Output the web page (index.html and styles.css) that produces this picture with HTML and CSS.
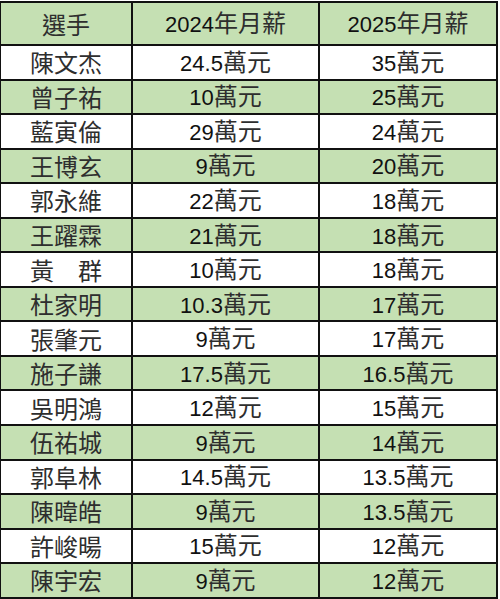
FILE: index.html
```html
<!DOCTYPE html>
<html lang="zh-Hant">
<head>
<meta charset="utf-8">
<link rel="stylesheet" href="styles.css">
</head>
<body>
<table class="salary">
  <thead>
    <tr class="green head">
      <th class="name">選手</th>
      <th>2024<span class="cjk">年月薪</span></th>
      <th>2025<span class="cjk">年月薪</span></th>
    </tr>
  </thead>
  <tbody>
    <tr><td class="name">陳文杰</td><td>24.5<span class="cjk">萬元</span></td><td>35<span class="cjk">萬元</span></td></tr>
    <tr class="green"><td class="name">曾子祐</td><td>10<span class="cjk">萬元</span></td><td>25<span class="cjk">萬元</span></td></tr>
    <tr><td class="name">藍寅倫</td><td>29<span class="cjk">萬元</span></td><td>24<span class="cjk">萬元</span></td></tr>
    <tr class="green"><td class="name">王博玄</td><td>9<span class="cjk">萬元</span></td><td>20<span class="cjk">萬元</span></td></tr>
    <tr><td class="name">郭永維</td><td>22<span class="cjk">萬元</span></td><td>18<span class="cjk">萬元</span></td></tr>
    <tr class="green"><td class="name">王躍霖</td><td>21<span class="cjk">萬元</span></td><td>18<span class="cjk">萬元</span></td></tr>
    <tr><td class="name">黃　群</td><td>10<span class="cjk">萬元</span></td><td>18<span class="cjk">萬元</span></td></tr>
    <tr class="green"><td class="name">杜家明</td><td>10.3<span class="cjk">萬元</span></td><td>17<span class="cjk">萬元</span></td></tr>
    <tr><td class="name">張肇元</td><td>9<span class="cjk">萬元</span></td><td>17<span class="cjk">萬元</span></td></tr>
    <tr class="green"><td class="name">施子謙</td><td>17.5<span class="cjk">萬元</span></td><td>16.5<span class="cjk">萬元</span></td></tr>
    <tr><td class="name">吳明鴻</td><td>12<span class="cjk">萬元</span></td><td>15<span class="cjk">萬元</span></td></tr>
    <tr class="green"><td class="name">伍祐城</td><td>9<span class="cjk">萬元</span></td><td>14<span class="cjk">萬元</span></td></tr>
    <tr><td class="name">郭阜林</td><td>14.5<span class="cjk">萬元</span></td><td>13.5<span class="cjk">萬元</span></td></tr>
    <tr class="green"><td class="name">陳暐皓</td><td>9<span class="cjk">萬元</span></td><td>13.5<span class="cjk">萬元</span></td></tr>
    <tr><td class="name">許峻暘</td><td>15<span class="cjk">萬元</span></td><td>12<span class="cjk">萬元</span></td></tr>
    <tr class="green"><td class="name">陳宇宏</td><td>9<span class="cjk">萬元</span></td><td>12<span class="cjk">萬元</span></td></tr>
  </tbody>
</table>
</body>
</html>
```
FILE: styles.css
```css
html, body {
  margin: 0;
  padding: 0;
  background: #ffffff;
}

body {
  padding-top: 1px;
}

.salary {
  border-collapse: collapse;
  margin-left: -1px;
  width: 499px;
  table-layout: fixed;
  font-family: "Liberation Sans", "Noto Sans CJK TC", sans-serif;
  font-size: 22px;
  color: #111111;
}

.salary th,
.salary td {
  border: 2px solid #111111;
  padding: 0;
  text-align: center;
  vertical-align: middle;
  font-weight: 400;
  line-height: 26px;
  white-space: nowrap;
}

.salary .cjk,
.salary .name {
  font-family: "Noto Sans CJK TC", sans-serif;
  font-size: 24px;
  color: #2e2e2e;
}

.salary th:nth-child(1),
.salary td:nth-child(1) {
  width: 130px;
}

.salary th:nth-child(2),
.salary td:nth-child(2) {
  width: 185px;
}

.salary tr {
  height: 34.56px;
}

.salary tr.head {
  height: 43px;
}

.salary tr.green {
  background: #c5e0b3;
}
```
